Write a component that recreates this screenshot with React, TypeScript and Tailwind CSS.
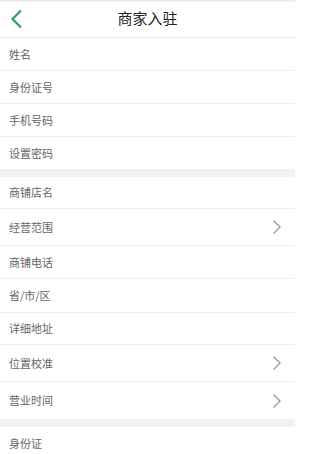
type Row = { label: string; h: string; arrow?: boolean };

const groups: Row[][] = [
  [
    { label: "姓名", h: "h-[33px]" },
    { label: "身份证号", h: "h-[33px]" },
    { label: "手机号码", h: "h-[33px]" },
    { label: "设置密码", h: "h-[32px]" },
  ],
  [
    { label: "商铺店名", h: "h-[32px]" },
    { label: "经营范围", h: "h-[37px]", arrow: true },
    { label: "商铺电话", h: "h-[33px]" },
    { label: "省/市/区", h: "h-[34px]" },
    { label: "详细地址", h: "h-[32px]" },
    { label: "位置校准", h: "h-[37px]", arrow: true },
    { label: "营业时间", h: "h-[37px]", arrow: true },
  ],
  [{ label: "身份证", h: "h-[33px]" }],
];

function Chevron() {
  return (
    <svg width="10" height="16" viewBox="0 0 10 16" fill="none" className="text-[#9a9a9a]">
      <path d="M1.5 1.5 8 8l-6.5 6.5" stroke="currentColor" strokeWidth="1.4" />
    </svg>
  );
}

function FormRow({ row, last }: { row: Row; last: boolean }) {
  return (
    <div
      className={
        "flex items-center justify-between pl-[9px] pr-[13px] " +
        row.h +
        (last ? "" : " border-b border-[#ededed]")
      }
    >
      <span className="text-[11px] text-[#666]">{row.label}</span>
      {row.arrow && <Chevron />}
    </div>
  );
}

export default function App() {
  return (
    <div
      className="h-[454px] w-[295px] overflow-hidden bg-[#f1f1f6]"
      style={{ fontFamily: '"Noto Sans CJK SC", "Noto Sans", sans-serif' }}
    >
      <header className="relative flex h-[38px] items-center justify-center border-b border-[#e8e8e8] bg-white shadow-[inset_0_2px_2px_-1px_rgba(0,0,0,0.12)]">
        <svg width="14" height="20" viewBox="0 0 14 20" fill="none" className="absolute left-[9px] top-[9px] text-[#2e9e5b]">
          <path d="M12 1.5 3.5 10l8.5 8.5" stroke="currentColor" strokeWidth="2.2" />
        </svg>
        <h1 className="text-[15px] text-[#222]">商家入驻</h1>
      </header>
      {groups.map((group, gi) => (
        <div key={gi} className={"bg-white " + (gi > 0 ? "mt-[8px]" : "")}>
          {group.map((row, ri) => (
            <FormRow key={row.label} row={row} last={ri === group.length - 1} />
          ))}
        </div>
      ))}
    </div>
  );
}
